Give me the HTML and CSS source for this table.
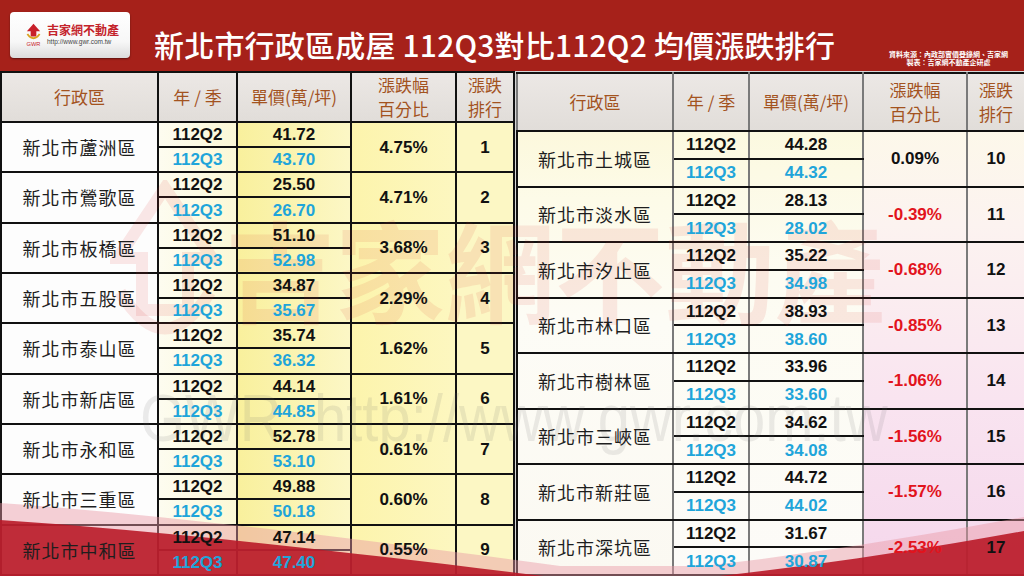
FILE: index.html
```html
<!DOCTYPE html>
<html lang="zh-Hant">
<head>
<meta charset="utf-8">
<title>新北市行政區成屋 112Q3對比112Q2 均價漲跌排行</title>
<link rel="stylesheet" href="styles.css">
</head>
<body>
<div class="page">
  <header class="topbar">
    <div class="logo">
      <svg class="logo-icon" width="17" height="26" viewBox="0 0 18 26">
        <path d="M9 1 L16 9 L12 9 L12 14.5 L6 14.5 L6 9 L2 9 Z" fill="#c8202a"/>
        <path d="M2.5 12 Q9 21 15.5 12" fill="none" stroke="#d9a21f" stroke-width="2"/>
        <text x="9" y="25" font-size="6" font-family="Liberation Sans, sans-serif" fill="#c8202a" text-anchor="middle">GWR</text>
      </svg>
      <div class="logo-text">
        <div class="logo-name">吉家網不動產</div>
        <div class="logo-url">http://www.gwr.com.tw</div>
      </div>
    </div>
    <h1 class="title">新北市行政區成屋 112Q3對比112Q2 均價漲跌排行</h1>
    <div class="source">
      <div>資料來源：內政部實價登錄網、吉家網</div>
      <div>製表：吉家網不動產企研處</div>
    </div>
  </header>

  <main class="tables">
    <table class="rank rank-left">
      <colgroup>
        <col class="c-name"><col class="c-yr"><col class="c-pr"><col class="c-pct"><col class="c-rk">
      </colgroup>
      <thead>
        <tr class="hd">
          <th><span class="t">行政區</span></th>
          <th><span class="t">年 / 季</span></th>
          <th><span class="t">單價(萬/坪)</span></th>
          <th><span class="t">漲跌幅<br>百分比</span></th>
          <th><span class="t">漲跌<br>排行</span></th>
        </tr>
      </thead>
      <tbody>
        <tr class="q2"><td class="name" rowspan="2"><span class="t">新北市蘆洲區</span></td><td><span class="t">112Q2</span></td><td><span class="t">41.72</span></td><td class="pct" rowspan="2"><span class="t">4.75%</span></td><td class="rk" rowspan="2"><span class="t">1</span></td></tr>
        <tr class="q3"><td><span class="t">112Q3</span></td><td><span class="t">43.70</span></td></tr>
        <tr class="q2"><td class="name" rowspan="2"><span class="t">新北市鶯歌區</span></td><td><span class="t">112Q2</span></td><td><span class="t">25.50</span></td><td class="pct" rowspan="2"><span class="t">4.71%</span></td><td class="rk" rowspan="2"><span class="t">2</span></td></tr>
        <tr class="q3"><td><span class="t">112Q3</span></td><td><span class="t">26.70</span></td></tr>
        <tr class="q2"><td class="name" rowspan="2"><span class="t">新北市板橋區</span></td><td><span class="t">112Q2</span></td><td><span class="t">51.10</span></td><td class="pct" rowspan="2"><span class="t">3.68%</span></td><td class="rk" rowspan="2"><span class="t">3</span></td></tr>
        <tr class="q3"><td><span class="t">112Q3</span></td><td><span class="t">52.98</span></td></tr>
        <tr class="q2"><td class="name" rowspan="2"><span class="t">新北市五股區</span></td><td><span class="t">112Q2</span></td><td><span class="t">34.87</span></td><td class="pct" rowspan="2"><span class="t">2.29%</span></td><td class="rk" rowspan="2"><span class="t">4</span></td></tr>
        <tr class="q3"><td><span class="t">112Q3</span></td><td><span class="t">35.67</span></td></tr>
        <tr class="q2"><td class="name" rowspan="2"><span class="t">新北市泰山區</span></td><td><span class="t">112Q2</span></td><td><span class="t">35.74</span></td><td class="pct" rowspan="2"><span class="t">1.62%</span></td><td class="rk" rowspan="2"><span class="t">5</span></td></tr>
        <tr class="q3"><td><span class="t">112Q3</span></td><td><span class="t">36.32</span></td></tr>
        <tr class="q2"><td class="name" rowspan="2"><span class="t">新北市新店區</span></td><td><span class="t">112Q2</span></td><td><span class="t">44.14</span></td><td class="pct" rowspan="2"><span class="t">1.61%</span></td><td class="rk" rowspan="2"><span class="t">6</span></td></tr>
        <tr class="q3"><td><span class="t">112Q3</span></td><td><span class="t">44.85</span></td></tr>
        <tr class="q2"><td class="name" rowspan="2"><span class="t">新北市永和區</span></td><td><span class="t">112Q2</span></td><td><span class="t">52.78</span></td><td class="pct" rowspan="2"><span class="t">0.61%</span></td><td class="rk" rowspan="2"><span class="t">7</span></td></tr>
        <tr class="q3"><td><span class="t">112Q3</span></td><td><span class="t">53.10</span></td></tr>
        <tr class="q2"><td class="name" rowspan="2"><span class="t">新北市三重區</span></td><td><span class="t">112Q2</span></td><td><span class="t">49.88</span></td><td class="pct" rowspan="2"><span class="t">0.60%</span></td><td class="rk" rowspan="2"><span class="t">8</span></td></tr>
        <tr class="q3"><td><span class="t">112Q3</span></td><td><span class="t">50.18</span></td></tr>
        <tr class="q2"><td class="name" rowspan="2"><span class="t">新北市中和區</span></td><td><span class="t">112Q2</span></td><td><span class="t">47.14</span></td><td class="pct" rowspan="2"><span class="t">0.55%</span></td><td class="rk" rowspan="2"><span class="t">9</span></td></tr>
        <tr class="q3"><td><span class="t">112Q3</span></td><td><span class="t">47.40</span></td></tr>
      </tbody>
    </table>

    <table class="rank rank-right">
      <colgroup>
        <col class="c-name"><col class="c-yr"><col class="c-pr"><col class="c-pct"><col class="c-rk">
      </colgroup>
      <thead>
        <tr class="hd">
          <th><span class="t">行政區</span></th>
          <th><span class="t">年 / 季</span></th>
          <th><span class="t">單價(萬/坪)</span></th>
          <th><span class="t">漲跌幅<br>百分比</span></th>
          <th><span class="t">漲跌<br>排行</span></th>
        </tr>
      </thead>
      <tbody>
        <tr class="q2"><td class="name" rowspan="2"><span class="t">新北市土城區</span></td><td><span class="t">112Q2</span></td><td><span class="t">44.28</span></td><td class="pct" rowspan="2"><span class="t">0.09%</span></td><td class="rk" rowspan="2"><span class="t">10</span></td></tr>
        <tr class="q3"><td><span class="t">112Q3</span></td><td><span class="t">44.32</span></td></tr>
        <tr class="q2"><td class="name" rowspan="2"><span class="t">新北市淡水區</span></td><td><span class="t">112Q2</span></td><td><span class="t">28.13</span></td><td class="pct neg" rowspan="2"><span class="t">-0.39%</span></td><td class="rk" rowspan="2"><span class="t">11</span></td></tr>
        <tr class="q3"><td><span class="t">112Q3</span></td><td><span class="t">28.02</span></td></tr>
        <tr class="q2"><td class="name" rowspan="2"><span class="t">新北市汐止區</span></td><td><span class="t">112Q2</span></td><td><span class="t">35.22</span></td><td class="pct neg" rowspan="2"><span class="t">-0.68%</span></td><td class="rk" rowspan="2"><span class="t">12</span></td></tr>
        <tr class="q3"><td><span class="t">112Q3</span></td><td><span class="t">34.98</span></td></tr>
        <tr class="q2"><td class="name" rowspan="2"><span class="t">新北市林口區</span></td><td><span class="t">112Q2</span></td><td><span class="t">38.93</span></td><td class="pct neg" rowspan="2"><span class="t">-0.85%</span></td><td class="rk" rowspan="2"><span class="t">13</span></td></tr>
        <tr class="q3"><td><span class="t">112Q3</span></td><td><span class="t">38.60</span></td></tr>
        <tr class="q2"><td class="name" rowspan="2"><span class="t">新北市樹林區</span></td><td><span class="t">112Q2</span></td><td><span class="t">33.96</span></td><td class="pct neg" rowspan="2"><span class="t">-1.06%</span></td><td class="rk" rowspan="2"><span class="t">14</span></td></tr>
        <tr class="q3"><td><span class="t">112Q3</span></td><td><span class="t">33.60</span></td></tr>
        <tr class="q2"><td class="name" rowspan="2"><span class="t">新北市三峽區</span></td><td><span class="t">112Q2</span></td><td><span class="t">34.62</span></td><td class="pct neg" rowspan="2"><span class="t">-1.56%</span></td><td class="rk" rowspan="2"><span class="t">15</span></td></tr>
        <tr class="q3"><td><span class="t">112Q3</span></td><td><span class="t">34.08</span></td></tr>
        <tr class="q2"><td class="name" rowspan="2"><span class="t">新北市新莊區</span></td><td><span class="t">112Q2</span></td><td><span class="t">44.72</span></td><td class="pct neg" rowspan="2"><span class="t">-1.57%</span></td><td class="rk" rowspan="2"><span class="t">16</span></td></tr>
        <tr class="q3"><td><span class="t">112Q3</span></td><td><span class="t">44.02</span></td></tr>
        <tr class="q2"><td class="name" rowspan="2"><span class="t">新北市深坑區</span></td><td><span class="t">112Q2</span></td><td><span class="t">31.67</span></td><td class="pct neg" rowspan="2"><span class="t">-2.53%</span></td><td class="rk" rowspan="2"><span class="t">17</span></td></tr>
        <tr class="q3"><td><span class="t">112Q3</span></td><td><span class="t">30.87</span></td></tr>
      </tbody>
    </table>
  </main>

  <div class="watermark" aria-hidden="true">
    <svg class="wm-logo" width="110" height="190" viewBox="0 0 110 190">
      <path d="M55 8 L102 78 L78 78 L78 130 L32 130 L32 78 L8 78 Z" fill="none" stroke="rgba(215,50,45,0.11)" stroke-width="12"/>
      <path d="M10 112 Q55 185 100 112" fill="none" stroke="rgba(215,50,45,0.11)" stroke-width="12"/>
    </svg>
    <div class="wm-name">吉家網不動產</div>
    <div class="wm-url">GWR&nbsp; http://www.gwr.com.tw</div>
  </div>

  <svg class="swoosh" width="1024" height="576" viewBox="0 0 1024 576" aria-hidden="true">
    <path d="M0 503 C180 516 380 542 560 566 L700 566 C800 556 920 536 1024 517 L1024 576 L0 576 Z" fill="rgba(232,150,165,0.45)"/>
    <path d="M0 520 C180 532 380 556 560 578 L700 578 C800 568 920 550 1024 531 L1024 576 L0 576 Z" fill="rgba(185,26,40,0.9)"/>
  </svg>
</div>
</body>
</html>
```

FILE: styles.css
```css
* { box-sizing: border-box; }

html, body {
  margin: 0;
  padding: 0;
}

body {
  width: 1024px;
  height: 576px;
  overflow: hidden;
  background: #d4d4d4;
  font-family: "Noto Sans CJK TC", "Noto Sans", sans-serif;
}

.page {
  position: relative;
  z-index: 0;
  width: 1024px;
  height: 576px;
  overflow: hidden;
  background: #d6d6d6;
}

/* ---------- header band ---------- */
.topbar {
  display: flex;
  align-items: flex-start;
  height: 71px;
  padding: 12px 0 0 10px;
  background: #a6211a;
}

.logo {
  display: flex;
  align-items: center;
  gap: 5px;
  width: 120px;
  height: 46px;
  padding: 0 0 2px 15px;
  border-radius: 4px;
  background: linear-gradient(#ffffff 0%, #f7f7f7 65%, #dcdcdc 100%);
  box-shadow: 0 1px 2px rgba(0, 0, 0, 0.45);
}

.logo-icon { flex: none; margin-top: 2px; }

.logo-text { display: flex; flex-direction: column; }

.logo-name {
  font-size: 12px;
  line-height: 15px;
  font-weight: 700;
  color: #c4232b;
}

.logo-url {
  font-family: "Liberation Sans", Arial, sans-serif;
  font-size: 6.5px;
  line-height: 9px;
  color: #444;
}

.title {
  margin: 14px 0 0 24px;
  font-size: 30px;
  line-height: 37px;
  font-weight: 500;
  color: #ffffff;
  white-space: nowrap;
  letter-spacing: 0.2px;
}

.source {
  margin: 38px 16px 0 auto;
  font-size: 7px;
  line-height: 8px;
  font-weight: 700;
  color: #ffffff;
  text-align: center;
  white-space: nowrap;
}

/* ---------- tables ---------- */
.tables {
  display: flex;
  align-items: flex-start;
  gap: 1px;
  height: 505px;
}

.rank {
  border-collapse: collapse;
  table-layout: fixed;
  font-family: "Liberation Sans", Arial, sans-serif;
  font-weight: 700;
  font-size: 17px;
  color: #111;
}

.rank td, .rank th {
  padding: 0;
  text-align: center;
  vertical-align: middle;
  line-height: 1;
  border: 2px solid #111;
}

.t {
  position: relative;
  z-index: 3;
}

.rank th {
  font-family: "Noto Sans CJK TC", sans-serif;
  font-weight: 400;
  font-size: 17px;
  line-height: 24px;
  color: #a3531f;
  background: linear-gradient(#ece8e5, #e1ddd9);
}

.rank .name {
  font-family: "Noto Sans CJK TC", sans-serif;
  font-weight: 400;
  font-size: 18px;
  letter-spacing: 1px;
  color: #1e1e1e;
}

.rank .q3 td { color: #1fa5da; }
.rank .q3 td.name { color: #1e1e1e; }
.rank .neg { color: #e2131c; }

/* left table */
.rank-left {
  width: 513px;
  height: 505px;
}
.rank-left .hd { height: 50px; }
.rank-left tbody tr { height: 25px; }

.rank-left .c-name { width: 157px; background: #fdfdfd; }
.rank-left .c-yr { width: 79px; background: linear-gradient(to right, #fdfcf0, #fbf8d6); }
.rank-left .c-pr { width: 114px; background: linear-gradient(to right, #f9f09c, #fcf7c6); }
.rank-left .c-pct { width: 105px; background: linear-gradient(to right, #fcf4ac, #fdf7c0); }
.rank-left .c-rk { width: 58px; background: #fcf7c4; }

/* right table */
.rank-right {
  width: 508px;
  height: 504px;
  margin-top: 1px;
}
.rank-right .hd { height: 58px; }
.rank-right tbody tr { height: 27px; }
.rank-right td, .rank-right th {
  border-left-color: #7a7a7a;
  border-right-color: #7a7a7a;
}
.rank-right td.name { border-left-color: #111; }

.rank-right .c-name { width: 156px; background: linear-gradient(#fbf6d2 0%, #fdfbe8 25%, #fdfcf6 50%, #fbf9f2 100%); }
.rank-right .c-yr { width: 76px; background: linear-gradient(#fbf8d8 0%, #fdfcf2 40%, #fcfbf8 100%); }
.rank-right .c-pr { width: 114px; background: linear-gradient(#fbf8d8 0%, #fdfcf2 40%, #fcfbf8 100%); }
.rank-right .c-pct { width: 104px; background: linear-gradient(#fdfbe6 0%, #fcf3f0 30%, #f9e4f0 65%, #f5d7ec 100%); }
.rank-right .c-rk { width: 58px; background: linear-gradient(#fdfbe6 0%, #fcf3f0 30%, #f9e4f0 65%, #f5d7ec 100%); }

/* ---------- decorative layers ---------- */
.watermark {
  position: absolute;
  left: 110px;
  top: 180px;
  z-index: 1;
  width: 800px;
  height: 290px;
  pointer-events: none;
}

.wm-logo {
  position: absolute;
  left: 0;
  top: 0;
}

.wm-name {
  position: absolute;
  left: 115px;
  top: 12px;
  font-size: 110px;
  line-height: 150px;
  font-weight: 700;
  color: rgba(215, 45, 40, 0.10);
  white-space: nowrap;
}

.wm-url {
  position: absolute;
  left: 30px;
  top: 200px;
  font-family: "Liberation Sans", Arial, sans-serif;
  font-size: 58px;
  line-height: 66px;
  color: rgba(110, 110, 110, 0.13);
  white-space: nowrap;
  transform: scaleY(1.15);
  transform-origin: left top;
}

.swoosh {
  position: absolute;
  left: 0;
  top: 0;
  z-index: 2;
  pointer-events: none;
}
```
